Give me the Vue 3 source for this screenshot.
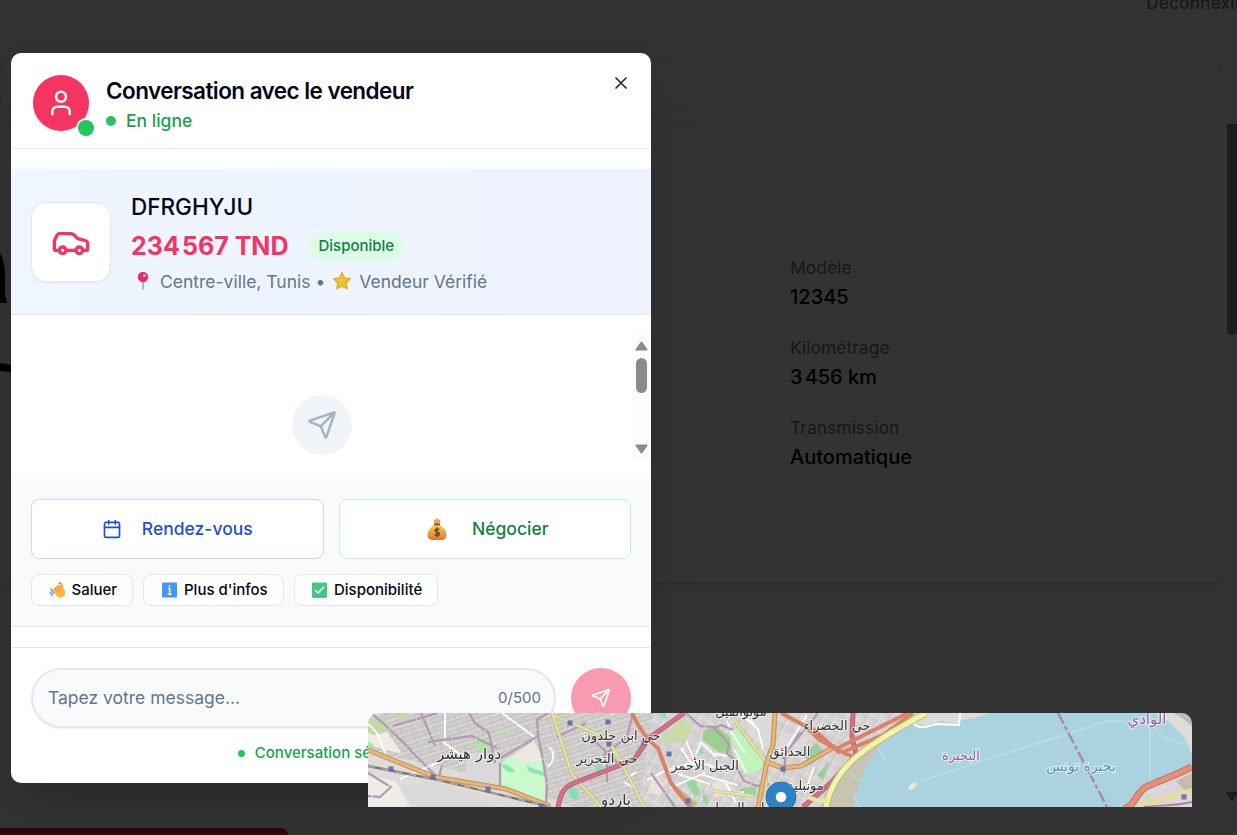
<script setup>
const specs = [
  { label: 'Modèle', groups: ['12345'] },
  { label: 'Kilométrage', groups: ['3', '456 km'] },
  { label: 'Transmission', groups: ['Automatique'] },
]
const priceGroups = ['234', '567 TND']
const planePath = 'M14.536 21.686a.5.5 0 0 0 .937-.024l6.5-19a.496.496 0 0 0-.635-.635l-19 6.5a.5.5 0 0 0-.024.937l7.93 3.18a2 2 0 0 1 1.112 1.11z'
const stations = [[23, 56], [65, 64], [120, 76], [173, 93], [202, 10], [240, 9], [241, 31], [276, 30], [301, 41], [415, 56], [320, 88], [816, 84]]
const placeNames = [
  { t: 'دوار هيشر', x: 101, y: 46, s: 15 },
  { t: 'حي ابن خلدون', x: 253, y: 27, s: 13 },
  { t: 'حي التحرير', x: 239, y: 50, s: 13 },
  { t: 'باردو', x: 248, y: 92, s: 15 },
  { t: 'الجبل الأحمر', x: 337, y: 57, s: 13 },
  { t: 'مونوانفيل', x: 373, y: 3, s: 13 },
  { t: 'الحدائق', x: 422, y: 43, s: 13 },
  { t: 'حي الخضراء', x: 469, y: 17, s: 13 },
  { t: 'مونبليزير', x: 432, y: 77, s: 13 },
  { t: 'باب العسل', x: 371, y: 99, s: 13 },
]
</script>

<template>
  <div class="screen">
    <div class="page">
      <div class="nav"><span>Déconnexion</span></div>
      <div class="toolbar"><div class="search"></div><div class="filter"></div></div>
      <section class="card">
        <dl class="specs">
          <div v-for="s in specs" :key="s.label" class="spec">
            <dt>{{ s.label }}</dt><dd><template v-for="(g, i) in s.groups" :key="g"><span v-if="i" class="thin">{{ '\u202f' }}</span>{{ g }}</template></dd>
          </div>
        </dl>
      </section>
      <div class="page-end"><div class="danger"></div></div>
      <svg class="artwork" width="12" height="140" viewBox="0 0 12 140"><path d="M0 12c3 5 5 12 5 24v19l2 6v1H0zM0 122l11 2v7l-11-1z" /></svg>
      <div class="page-thumb"></div>
      <svg class="page-arrow" width="12" height="10" viewBox="0 0 12 10"><path d="M1.5 1h9L6 8z" fill="#1c1c1c" stroke="#1c1c1c" stroke-width="2" stroke-linejoin="round" /></svg>
    </div>

    <div class="dialog">
      <header class="head">
        <div class="avatar">
          <svg class="ico" width="30" height="30" viewBox="0 0 24 24"><path d="M19 21v-2a4 4 0 0 0-4-4H9a4 4 0 0 0-4 4v2" /><circle cx="12" cy="7" r="4" /></svg>
          <i class="presence"></i>
        </div>
        <div class="who">
          <h2>Conversation avec le vendeur</h2>
          <div class="online"><i></i>En ligne</div>
        </div>
        <svg class="ico close" width="20" height="20" viewBox="0 0 24 24"><path d="M18 6 6 18M6 6l12 12" /></svg>
      </header>

      <section class="vehicle">
        <div class="thumb">
          <svg class="ico" width="40" height="40" viewBox="0 0 24 24"><path d="M19 17h2c.6 0 1-.4 1-1v-3c0-.9-.7-1.7-1.5-1.9C18.7 10.6 16 10 16 10s-1.3-1.4-2.2-2.3c-.5-.4-1.1-.7-1.8-.7H5c-.6 0-1.1.4-1.4.9l-1.4 2.9A3.7 3.7 0 0 0 2 12v4c0 .6.4 1 1 1h2M9 17h6" /><circle cx="7" cy="17" r="2" /><circle cx="17" cy="17" r="2" /></svg>
        </div>
        <div class="info">
          <h3>DFRGHYJU</h3>
          <div class="price-row"><strong><template v-for="(g, i) in priceGroups" :key="g"><span v-if="i" class="thin">{{ '\u202f' }}</span>{{ g }}</template></strong><span class="badge">Disponible</span></div>
          <div class="place">
            <svg class="pin" width="14" height="20" viewBox="0 0 14 20"><path d="M7 9v9.500" stroke="#9b9ba6" stroke-width="1.5" /><circle cx="7" cy="6" r="5.2" fill="#e62f67" /><circle cx="8.5" cy="4.5" r="1.6" fill="#ff9dbb" /></svg>
            <span>Centre-ville, Tunis •</span>
            <svg class="star" width="20" height="20" viewBox="0 0 20 20"><path d="M10 1.8 12.5 7l5.8.8-4.2 4.1 1 5.800-5.100-2.500-5.100 2.500 1-5.800-4.200-4.100L7.500 7z" fill="#edc233" stroke="#dfb02f" stroke-width="1.500" stroke-linejoin="round" /></svg>
            <span>Vendeur Vérifié</span>
          </div>
        </div>
      </section>

      <section class="messages">
        <div class="empty"><svg class="ico" width="30" height="30" viewBox="0 0 24 24"><path :d="planePath" /><path d="m21.854 2.147-10.940 10.939" /></svg></div>
        <div class="scrollbar">
          <svg width="14" height="10" viewBox="0 0 14 10"><path d="M2.500 8.500h10L7.500 1.500z" /></svg>
          <i></i>
          <svg class="down" width="14" height="10" viewBox="0 0 14 10"><path d="M2.500 1.500h10L7.500 8.500z" /></svg>
        </div>
      </section>

      <section class="actions">
        <div class="main-actions">
          <button class="meet"><svg class="ico" width="20" height="20" viewBox="0 0 24 24"><path d="M8 2v4M16 2v4M3 10h18" /><rect x="3" y="4" width="18" height="18" rx="2" /></svg><span>Rendez-vous</span></button>
          <button class="deal">
            <svg width="20" height="24" viewBox="0 0 20 24"><defs><linearGradient id="bag" x2="0" y2="1"><stop stop-color="#fccb4b" /><stop offset="1" stop-color="#dd7535" /></linearGradient></defs><path d="M6.500 2.500 8.500 3 10 1l1.500 2 2-.5-.8 4H7.300z" fill="#f3a33a" /><path d="M7.500 8h5c4 2 7 6 7 10 0 4-3 5-5 5h-9c-2 0-5-1-5-5 0-4 3-8 7-10z" fill="url(#bag)" /><path d="M7 6.500h6v1.800H7z" fill="#7b4a2c" /><path d="M12.300 12.800c-.7-1-4.200-1.200-4.200.8 0 2.200 4.300 1.200 4.300 3.500 0 1.900-3.700 1.800-4.700.4M10 10.500v9.500" fill="none" stroke="#6b4426" stroke-width="1.500" /></svg><span>Négocier</span></button>
        </div>
        <div class="chips">
          <span class="chip">
            <svg width="17" height="16" viewBox="0 0 17 16"><path d="M1.500 6.500 5 12M.8 10l3 4M9.500 1.200c1.800-.5 3.300.5 3.300 2.300" fill="none" stroke="#66a9df" stroke-width="1.500" /><path d="M5 6 9 3l4-.8c1-.2 1.500.8.8 1.500L16 9c.8 3-.5 6-4 6.500-3 .3-4-1-5.500-3L4 8.500c-.6-1 .3-2 1-1.500z" fill="#ffb341" /><path d="m6 6 4 4M8 4.300l4 4" stroke="#df8428" stroke-width=".8" /></svg><span>Saluer</span></span>
          <span class="chip"><svg width="17" height="16" viewBox="0 0 17 16"><rect x="1" y=".5" width="15" height="15" rx="1.200" fill="#4596ec" /><path d="M8.500 3v1.800M7 6.500h1.700V12M6.700 12.300h3.800" fill="none" stroke="#e8f5ff" stroke-width="1.500" /></svg><span>Plus d'infos</span></span>
          <span class="chip"><svg width="17" height="16" viewBox="0 0 17 16"><rect x="1" y=".5" width="15" height="15" rx="1.200" fill="#45c783" /><path d="M1.500 15h14" stroke="#30a56b" /><path d="m4 8 3 3 6-6.300" fill="none" stroke="#fff" stroke-width="1.500" /></svg><span>Disponibilité</span></span>
        </div>
      </section>

      <footer class="composer">
        <div class="compose-row">
          <div class="field"><span>Tapez votre message...</span><small>0/500</small></div>
          <div class="send"><svg class="ico" width="20" height="20" viewBox="0 0 24 24"><path :d="planePath" /><path d="m21.854 2.147-10.940 10.939" /></svg></div>
        </div>
        <div class="secure"><i></i>Conversation sécurisée</div>
      </footer>
    </div>

    <svg class="map" width="824" height="94" viewBox="0 0 824 94">
      <defs>
        <pattern id="blocks" width="11" height="9" patternUnits="userSpaceOnUse" patternTransform="rotate(-18)"><rect width="11" height="9" fill="#d2d0cd" /><path d="M0 2.500h11M4 0v9M0 7h11M8.500 2v5" stroke="#c3c1bf" stroke-width="1" /><path d="M0 5h11" stroke="#e5e3e0" stroke-width=".8" /></pattern>
        <pattern id="blocks2" width="10" height="12" patternUnits="userSpaceOnUse" patternTransform="rotate(28)"><rect width="10" height="12" fill="#d5d3d1" /><path d="M0 4h10M5 0v12" stroke="#e6e4e3" stroke-width="1" /><path d="M2 0v12M0 9h10" stroke="#c8c6c4" stroke-width=".8" /></pattern>
      </defs>
      <g class="tiles">
      <rect width="824" height="94" fill="#dedbd8" />
      <path d="M14 0h280v94H205l-65-25L0 38V15z" fill="url(#blocks)" />
      <path d="M285 0h250l-60 94H270z" fill="url(#blocks2)" />
      <path d="M98 40h34v34L98 65zM20 72l50-2 60 24H50z" fill="#dad9d9" />
      <path d="M378 4l30-2-4 36-22-14zM412 20l34 4-18 16-20 4z" fill="#dcdbda" />
      <path d="M0 15l14-4 20 30-34-9zM0 62 28 68l14 26H0z" fill="#efece6" />
      <path d="M0 5h15l10 12-18 5-7-2zM25 0h17l-8 7z" fill="#c4d8a4" />
      <path d="M0 28 6 32 0 36zM104 32l12-6 8 8-8 4zM133 16l7 2-4 4z" fill="#a8e89b" />
      <path d="m133 50 33-22 11 20v42l-44-16z" fill="#c8facc" />
      <path d="M145 42 166 28l7 20-22 2z" fill="#efe8df" />
      <path d="m158 53 18 6v4l-15-4zM133 52c6-3 13 5 14 6-7 4-10-2-14-6z" fill="#8ee4b6" />
      <path d="M201 76c5-3 9 0 9 6 2 5-7 6-9 0zM227 54l6-3 2 5-6 2zM292 2l6-2v6zM331 38l3-3 2 5-3 2z" fill="#7fe0b6" />
      <path d="m292 26 22-21 11 9-5 12-21 6z" fill="#cadbaa" />
      <path d="m335 18 12-6 15 12 2 17-14-2-15-12z" fill="#9dcf91" />
      <path d="m361 20 8-5 10 14 17 20-5 9-14 3-6-9-3-16z" fill="#bdf5bb" />
      <path d="m436 42 12-12 9 9-15 14zM449 62l13-14-7 19z" fill="#9bcea1" />
      <path d="m317 68 10-3 5 16-5 3zM335 82c5-2 6 8 4 10l-4-3zM371 76l18-3-2 10-12 1z" fill="#98d598" />
      <path d="m344 70 15-4 4 15-17 3zM284 62l12 8-4 13-12-4z" fill="#eae3db" />

      <g class="street">
        <path d="M0 11c12 8 12 20 18 30M77 0v29M75 29 99 46M32 66l42-18M134 0l34 25M181 34c8 7 3 18-2 20M260 65l8-6M256 69l9 5M279 67l20-10 32-9M313 35l10 15 13 5M318 28l9 20 20 6M328 41l5-12 15 15M310 61l32 10M347 41l13 2M359 8c5 15 11 20 18 32M372 0l18 16 5 20M386 10l-14-7M358 70l10 20M420 33l19-31M446 54l-9 26M360 82l16-3M302 75l35-15M335 62l34 10M366 36l12 23" />
      </g>
      <g class="lane">
        <path d="M3 0 15 10 43 37M25 13 70 0M53 0l14 33M60 29l44-6 25 12M42 37 70 65M0 60l23 14-11 10-12-1M74 52l-4 16M101 0l6 10 14 10 6 30M133 45l37-22-1-16 11-7M132 50v23M170 22l4 20 5 29-1 20M189 24l29-14M239 49v20M221 23l30 28M265 0l-6 24-24 19M318 0l14 13 13 1 8 8 8 9-2 10 8 5M346 15l7-3 12 5M368 53l8 15 13 5 12-2M310 76l15 18M283 60l24 34M418 36l-2 26M432 19l-17 27M450 0l-25 31" />
      </g>
      <path class="yellow" d="m184 0 20 61 29 33M183 1l57 25 23 42 13 26M365 5l17 23 15 19 1 24-9 23M308 75l20 17M345 78l40 5" />
      <path class="yellow inner" d="m184 0 20 61 29 33M183 1l57 25 23 42 13 26M365 5l17 23 15 19 1 24-9 23M345 78l40 5" />
      <path class="gold-edge" d="m0 37 67 27 71 12 44 17M407 0l-2 32-6 17-9 45M398 49l17 6 18-2 35-20" />
      <path class="gold" d="m0 37 67 27 71 12 44 17M407 0l-2 32-6 17-9 45M398 49l17 6 18-2 35-20" />
      <path d="M0 53 66 66 183 94" fill="none" stroke="#777574" stroke-width="2.300" /><path d="M0 53 66 66 183 94" fill="none" stroke="#c7c3bd" stroke-width="1" stroke-dasharray="7 7" />
      <path class="crimson-edge" d="M190 94c3-14 5-19 16-24l60-23 14-21 36-26M485 0l-1 23 4 19-25 28-28 24" />
      <path class="crimson" d="M190 94c3-14 5-19 16-24l60-23 14-21 36-26M485 0l-1 23 4 19-25 28-28 24" />
      <path class="coral" d="M264 0c8 17 16 28 26 35l13 35 19 24M413 0l24 13 15 14 24 13 12 5M468 36l40-20 32-16M475 39l40-17 30-22M445 16l27 24M487 43l3 3" />
      <path d="M549 0h17l13 10 26-5 17-5h164c18 9 34 24 38 42v52H482c6-34 22-57 43-72z" fill="#aad3df" />
      <path d="M453 94c12-29 29-44 53-62l31-19c-30 18-45 43-52 81z" fill="#c8c4b2" />
      <path d="M548 0h72l-12 5-14-1-4 7-17-3-15 5-14-4z" fill="#dddcd9" />
      <path d="M544 9c8 9 16 4 25 2l22 1 1-12" fill="none" stroke="#fff" stroke-width="2" />
      <path d="M458 94c8-40 37-60 100-94" fill="none" stroke="#b7bd69" stroke-width="7" /><path d="M458 94c8-40 37-60 100-94" fill="none" stroke="#f0f4ad" stroke-width="5" />
      <path d="M440 84c10 5 13 3 21 4" fill="none" stroke="#e8e99c" stroke-width="4" />
      <path d="M481 60l13 9M510 35l7 12M491 94 486 82" stroke="#bcdce3" stroke-width="1.500" />
      <path d="M540 76c2-6 7-8 9-5-2 3-5 8-9 5z" fill="#eee6d8" />
      <path d="M553 68 739 8h19M782 11l13 12q14 9 29 8M782 0v94" fill="none" stroke="#c8e1e7" stroke-width="1" />
      <path d="M690 0l49 94" fill="none" stroke="#a589ae" stroke-width="2.400" stroke-dasharray="12 3 4 3" />
      <path d="M805 0h19v13c-6-5-10-9-19-13z" fill="#bdbda8" />
      <path d="M764 94c8-20 20-23 60-37v37z" fill="#ddd5dc" /><path d="m808 68 16-8v15l-8 2z" fill="#c6bda9" />
      <path d="M777 82c8-3 8 4 2 5" fill="#b5e8a9" /><path d="M772 91c20-3 34-7 52-14" stroke="#e5e18a" stroke-width="4" fill="none" />
      <path d="M756 96c13-5 10-14 22-22 11-6 22-8 46-20" fill="none" stroke="#bd765d" stroke-width="7" /><path d="M756 96c13-5 10-14 22-22 11-6 22-8 46-20" fill="none" stroke="#e98e76" stroke-width="5" />
      <path d="M776 94c18-2 30-1 48-5" fill="none" stroke="#a683a2" stroke-width="2" />
      <rect v-for="(p, i) in stations" :key="i" :x="p[0] - 2.5" :y="p[1] - 2.5" width="5" height="5" fill="#6873b6" />
      <text v-for="n in placeNames" :key="n.t" :x="n.x" :y="n.y" :font-size="n.s" class="place-name">{{ n.t }}</text>
      <text x="593" y="47" font-size="13" class="place-name suburb">البحيرة</text>
      <text x="779" y="11" font-size="15" class="place-name suburb">الوادي</text>
      <text x="713" y="58" font-size="14" class="place-name lake">بحيرة تونس</text>
      </g>
      <circle cx="413" cy="84" r="15" fill="#2c84c7" stroke="#2472ae" stroke-width="1" /><circle cx="413" cy="84" r="5.300" fill="#fff" />
    </svg>
  </div>
</template>

<style>
html, body { margin: 0; overflow: hidden; background: #333; }
</style>
<style scoped>
* { box-sizing: border-box; }
h2, h3, dl, dd { margin: 0; }
.screen { position: relative; width: 1237px; height: 835px; overflow: hidden; background: #333; font-family: Inter, "Liberation Sans", sans-serif; }
.ico { fill: none; stroke: currentColor; stroke-width: 2; stroke-linecap: round; stroke-linejoin: round; flex: none; }
.thin { letter-spacing: -.07em; }
.page { height: 835px; display: flex; flex-direction: column; }
.nav { height: 43px; border-bottom: 1px solid #2f2f2f; overflow: hidden; flex: none; }
.nav span { display: block; margin: -9px 0 0 1146px; font-size: 17.5px; line-height: 24px; font-weight: 500; color: #121920; white-space: nowrap; }
.toolbar { display: flex; align-items: center; gap: 15px; height: 81px; flex: none; border-bottom: 1px solid #2f2f2f; }
.search { width: 1204px; height: 50px; flex: none; border: 1px solid #2f2f2f; border-radius: 8px; }
.filter { width: 90px; height: 45px; flex: none; border: 1px solid #2f2f2f; border-radius: 8px; }
.card { height: 458px; width: 1222px; flex: none; padding: 130px 0 0 790px; border-radius: 0 0 10px 0; box-shadow: 0 5px 6px -2px rgba(0,0,0,.13); }
.specs { display: flex; flex-direction: column; gap: 20px; }
.spec { height: 60px; }
.spec dt { font-size: 17.5px; line-height: 28px; color: #15171a; }
.spec dd { font-size: 20px; line-height: 30px; font-weight: 500; color: #000; }
.page-end { flex: 1; display: flex; align-items: flex-end; }
.danger { width: 288px; height: 7px; background: #2d0808; border-radius: 0 7px 0 0; }
.artwork { position: absolute; left: 0; top: 241px; }
.page-thumb { position: absolute; left: 1227px; top: 124px; width: 10.500px; height: 211px; background: #1c1c1c; border-radius: 0 0 5px 5px; }
.page-arrow { position: absolute; left: 1226px; top: 792px; }

.dialog { position: absolute; left: 11px; top: 53px; width: 640px; height: 730.400px; background: #fff; border-radius: 10px; box-shadow: 0 25px 50px -12px rgba(0,0,0,.25); display: flex; flex-direction: column; overflow: hidden; }
.head { display: flex; height: 96px; flex: none; padding: 22px 20px 0 22px; border-bottom: 1px solid #e7ecf6; }
.avatar { position: relative; width: 56px; height: 56px; border-radius: 50%; background: #f43461; color: #fff; display: flex; align-items: center; justify-content: center; box-shadow: 0 1px 3px rgba(0,0,0,.1); }
.presence { position: absolute; left: 43px; top: 43px; width: 20px; height: 20px; border: 2px solid #fff; border-radius: 50%; background: #22c55e; }
.who { flex: 1; margin-left: 17px; padding-top: 2px; }
.who h2 { font-size: 22.5px; line-height: 28px; font-weight: 600; letter-spacing: -.025em; color: #020817; }
.online { display: flex; align-items: center; gap: 10px; margin-top: 3px; font-size: 17.5px; line-height: 25px; font-weight: 500; color: #16a34a; }
.online i { width: 10px; height: 10px; border-radius: 50%; background: #22c55e; }
.close { margin-top: -2px; color: #1f2633; }
.vehicle { display: flex; align-items: center; gap: 20px; flex: none; height: 146px; margin-top: 20px; padding: 0 20px; background: linear-gradient(90deg, #eff6ff, #eef2ff); border-bottom: 1px solid #e2e8f0; }
.thumb { width: 80px; height: 80px; display: flex; align-items: center; justify-content: center; color: #f43461; border: 1px solid #e5e7eb; border-radius: 15px; background: #fff; box-shadow: 0 1px 2px rgba(0,0,0,.05); }
.info { padding-top: 1px; }
.info h3 { font-size: 22.5px; line-height: 32px; font-weight: 500; color: #020817; }
.price-row { display: flex; align-items: center; gap: 20px; height: 46px; padding-top: 1px; }
.price-row strong { font-size: 25px; line-height: 35px; color: #f43461; white-space: nowrap; }
.badge { height: 30px; padding: 0 10px; border-radius: 15px; background: #dcfce7; color: #15803d; font-size: 15px; line-height: 29px; font-weight: 500; }
.place { display: flex; align-items: center; height: 25px; font-size: 17.5px; color: #64748b; white-space: nowrap; }
.pin { margin: 0 10px 0 5px; }
.star { margin: 0 7px; }
.messages { display: flex; height: 164px; flex: none; justify-content: space-between; }
.empty { display: flex; align-items: center; justify-content: center; width: 60px; height: 60px; margin: 80px 0 0 281px; border-radius: 50%; background: #f1f5f9; color: #a6b3c5; }
.scrollbar { width: 19px; height: 124px; margin-top: 20px; background: #fcfcfc; display: flex; flex-direction: column; align-items: center; padding: 6px 1px 0 0; }
.scrollbar path { fill: #8b8b8b; stroke: #8b8b8b; stroke-width: 2; stroke-linejoin: round; }
.scrollbar i { width: 11px; height: 35px; margin-top: 7px; border-radius: 6px; background: #8b8b8b; }
.scrollbar .down { margin-top: 51px; }
.actions { flex: none; height: 148px; padding: 20px 20px 0; background: #f8fafc; border-bottom: 1px solid #e2e8f0; }
.main-actions { display: grid; grid-template-columns: 1fr 1fr; gap: 15px; }
.main-actions button { height: 60px; display: flex; align-items: center; justify-content: center; gap: 20px; padding: 0 6px; background: #fff; border: 1px solid; border-radius: 8px; font: 500 17.5px Inter, sans-serif; }
.main-actions button span { padding-bottom: 2px; }
.main-actions .meet { color: #1d4ed8; border-color: #bfdbfe; }
.main-actions .deal { color: #15803d; border-color: #bbf7d0; gap: 25px; padding: 0 3px 0 9px; }
.chips { display: flex; gap: 10px; margin-top: 15px; }
.chip { display: flex; align-items: center; gap: 6px; width: 102px; height: 32px; padding-left: 16.500px; border: 1px solid #e5e7eb; border-radius: 8px; background: #fdfefe; font-size: 15px; font-weight: 500; color: #020817; white-space: nowrap; }
.chip:nth-child(2) { width: 141px; padding-left: 17px; }
.chip:nth-child(3) { width: 144px; padding-left: 16px; }
.chip span { padding-bottom: 2px; }
.composer { flex: 1; margin-top: 20px; padding: 20px 20px 0; border-top: 1px solid #e2e8f0; }
.compose-row { display: flex; gap: 15px; }
.field { flex: 1; height: 60px; display: flex; align-items: center; justify-content: space-between; padding: 0 13px 0 15px; border: 2px solid #e5e7eb; border-radius: 30px; background: #f8fafc; color: #64748b; font-size: 17.5px; box-shadow: 0 1px 2px rgba(0,0,0,.05); }
.field span { padding-bottom: 2px; }
.field small { font-size: 15px; padding-bottom: 2px; }
.send { width: 60px; height: 60px; border-radius: 50%; display: flex; align-items: center; justify-content: center; color: #fff; background: #fa9ab0; box-shadow: 0 4px 15px rgba(0,0,0,.05); }
.secure { display: flex; align-items: center; justify-content: center; gap: 10px; margin-top: 15px; font-size: 15px; line-height: 20px; font-weight: 500; color: #16a34a; }
.secure i { width: 7px; height: 7px; border-radius: 50%; background: #22c55e; }

.map { position: absolute; left: 368px; top: 713px; border-radius: 10px 10px 0 0; }
.tiles { filter: blur(.35px); }
.map .street path { fill: none; stroke: #fff; stroke-width: 1.800; }
.map .lane path { fill: none; stroke: #b49ab4; stroke-width: 2.300; stroke-linejoin: round; stroke-dasharray: 24 1; }
.yellow { fill: none; stroke: #bbb779; stroke-width: 3.500; }
.yellow.inner { stroke: #e7e4a2; stroke-width: 2.300; }
.gold-edge { fill: none; stroke: #be9259; stroke-width: 5; }
.gold { fill: none; stroke: #e6b779; stroke-width: 3; }
.crimson-edge { fill: none; stroke: #b75b73; stroke-width: 5; }
.crimson { fill: none; stroke: #d17087; stroke-width: 3.500; }
.coral { fill: none; stroke: #dc8069; stroke-width: 4; }
.place-name { font-family: "DejaVu Sans", sans-serif; text-anchor: middle; fill: #303030; stroke: rgba(255,255,255,.65); stroke-width: 2px; paint-order: stroke; }
.place-name.suburb { fill: #975f99; }
.place-name.lake { fill: #578bb8; }
</style>
